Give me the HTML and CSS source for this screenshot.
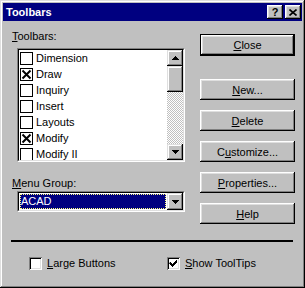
FILE: index.html
```html
<!DOCTYPE html>
<html>
<head>
  <title>Toolbars</title>
  <meta name="viewport" content="width=device-width, initial-scale=1.0">
  <link rel="stylesheet" href="styles.css">
</head>
<body>
<div class="ventana">
  <div class="titulo">
    <span class="titulo-texto">Toolbars</span>
    <div class="titulo-botones">
      <div class="cap-btn">?</div>
      <div class="cap-btn">
        <svg width="8" height="7" viewBox="0 0 8 7"><path d="M0.5 0.5 L7.5 6.5 M7.5 0.5 L0.5 6.5" stroke="#000" stroke-width="1.6"/></svg>
      </div>
    </div>
  </div>

  <div class="principal">
    <div class="izquierda">
      <div class="etiqueta"><u>T</u>oolbars:</div>
      <div class="lista">
        <div class="lista-interior">
          <div class="items">
            <div class="item"><span class="caja"></span>Dimension</div>
            <div class="item"><span class="caja marcada"><svg width="11" height="11" viewBox="0 0 11 11"><path d="M1.5 1.5 L9.5 9.5 M9.5 1.5 L1.5 9.5" stroke="#000" stroke-width="2"/></svg></span>Draw</div>
            <div class="item"><span class="caja"></span>Inquiry</div>
            <div class="item"><span class="caja"></span>Insert</div>
            <div class="item"><span class="caja"></span>Layouts</div>
            <div class="item"><span class="caja marcada"><svg width="11" height="11" viewBox="0 0 11 11"><path d="M1.5 1.5 L9.5 9.5 M9.5 1.5 L1.5 9.5" stroke="#000" stroke-width="2"/></svg></span>Modify</div>
            <div class="item"><span class="caja"></span>Modify II</div>
          </div>
          <div class="scroll">
            <div class="flecha">
              <svg width="7" height="4" viewBox="0 0 7 4"><path d="M3 0h1v1h1v1h1v1h1v1h-7v-1h1v-1h1v-1h1z" fill="#000"/></svg>
            </div>
            <div class="pulgar"></div>
            <div class="pista"></div>
            <div class="flecha">
              <svg width="7" height="4" viewBox="0 0 7 4"><path d="M0 0h7v1h-1v1h-1v1h-1v1h-1v-1h-1v-1h-1v-1h-1z" fill="#000"/></svg>
            </div>
          </div>
        </div>
      </div>

      <div class="etiqueta etiqueta-menu"><u>M</u>enu Group:</div>
      <div class="combo">
        <div class="combo-interior">
          <div class="combo-campo">
            <div class="combo-sel">ACAD</div>
          </div>
          <div class="flecha combo-flecha">
            <svg width="7" height="4" viewBox="0 0 7 4"><path d="M0 0h7v1h-1v1h-1v1h-1v1h-1v-1h-1v-1h-1v-1h-1z" fill="#000"/></svg>
          </div>
        </div>
      </div>
    </div>

    <div class="derecha">
      <div class="boton boton-defecto"><span><u>C</u>lose</span></div>
      <div class="boton boton-new"><span><u>N</u>ew...</span></div>
      <div class="boton"><span><u>D</u>elete</span></div>
      <div class="boton"><span>C<u>u</u>stomize...</span></div>
      <div class="boton"><span><u>P</u>roperties...</span></div>
      <div class="boton"><span><u>H</u>elp</span></div>
    </div>
  </div>

  <div class="separador"></div>

  <div class="opciones">
    <div class="opcion opcion-large">
      <span class="check"></span>
      <span><u>L</u>arge Buttons</span>
    </div>
    <div class="opcion">
      <span class="check"><svg width="13" height="13" viewBox="0 0 13 13"><path d="M3 5h1v1h1v1h1v-1h1v-1h1v-1h1v-1h1v3h-1v1h-1v1h-1v1h-1v1h-1v-1h-1v-1h-1v-1h-1z" fill="#000"/></svg></span>
      <span><u>S</u>how ToolTips</span>
    </div>
  </div>
</div>
</body>
</html>
```

FILE: styles.css
```css
body {
  margin: 0;
  font-family: "Liberation Sans", Arial, sans-serif;
  font-size: 11px;
  color: #000;
  background-color: #c0c0c0;
}

.ventana {
  width: 305px;
  height: 288px;
  box-sizing: border-box;
  padding: 3px;
  background-color: #c0c0c0;
  box-shadow: inset -1px -1px #000, inset 1px 1px #dfdfdf, inset -2px -2px #808080, inset 2px 2px #fff;
}

/* barra de titulo */
.titulo {
  height: 18px;
  background-color: #000080;
  color: white;
  display: flex;
  align-items: center;
  justify-content: space-between;
  padding: 0 1px 0 3px;
}

.titulo-texto {
  font-weight: bold;
  font-size: 11px;
}

.titulo-botones {
  display: flex;
  gap: 2px;
}

.cap-btn {
  width: 16px;
  height: 14px;
  box-sizing: border-box;
  background-color: #c0c0c0;
  color: black;
  font-weight: bold;
  font-size: 11px;
  display: flex;
  align-items: center;
  justify-content: center;
  box-shadow: inset -1px -1px #000, inset 1px 1px #fff, inset -2px -2px #808080, inset 2px 2px #dfdfdf;
}

/* contenido */
.principal {
  display: flex;
  align-items: flex-start;
  padding-left: 9px;
}

.izquierda {
  width: 173px;
  padding-top: 9px;
}

.etiqueta {
  height: 13px;
  line-height: 13px;
}

.etiqueta-menu {
  margin-top: 15px;
}

.lista {
  margin: 5px 0 0 5px;
  width: 168px;
  height: 114px;
  box-sizing: border-box;
  border: 1px solid;
  border-color: #808080 #fff #fff #808080;
}

.lista-interior {
  height: 100%;
  box-sizing: border-box;
  border: 1px solid;
  border-color: #000 #dfdfdf #dfdfdf #000;
  display: flex;
  background-color: white;
}

.items {
  flex: 1;
  overflow: hidden;
}

.item {
  height: 16px;
  line-height: 16px;
  display: flex;
  align-items: flex-start;
  white-space: nowrap;
}

.caja {
  width: 13px;
  height: 13px;
  box-sizing: border-box;
  border: 1px solid black;
  margin: 2px 3px 0 1px;
  flex-shrink: 0;
  display: flex;
}

.scroll {
  width: 16px;
  display: flex;
  flex-direction: column;
}

.flecha {
  width: 16px;
  height: 16px;
  box-sizing: border-box;
  background-color: #c0c0c0;
  display: flex;
  align-items: center;
  justify-content: center;
  flex-shrink: 0;
  box-shadow: inset -1px -1px #000, inset 1px 1px #dfdfdf, inset -2px -2px #808080, inset 2px 2px #fff;
}

.pulgar {
  height: 26px;
  flex-shrink: 0;
  background-color: #c0c0c0;
  box-shadow: inset -1px -1px #000, inset 1px 1px #dfdfdf, inset -2px -2px #808080, inset 2px 2px #fff;
}

.pista {
  flex: 1;
  background: repeating-conic-gradient(#c0c0c0 0 25%, #fff 0 50%) 0 0 / 2px 2px;
}

/* combo */
.combo {
  margin: 1px 0 0 5px;
  width: 168px;
  height: 21px;
  box-sizing: border-box;
  border: 1px solid;
  border-color: #808080 #fff #fff #808080;
}

.combo-interior {
  height: 100%;
  box-sizing: border-box;
  border: 1px solid;
  border-color: #000 #dfdfdf #dfdfdf #000;
  display: flex;
  background-color: white;
}

.combo-campo {
  flex: 1;
  padding: 1px;
}

.combo-sel {
  height: 100%;
  box-sizing: border-box;
  background-color: #000080;
  color: white;
  border: 1px dotted #ffff80;
  line-height: 13px;
  padding-left: 0;
}

.combo-flecha {
  height: 17px;
}

/* botones */
.derecha {
  margin-left: 15px;
  padding-top: 13px;
  width: 95px;
  display: flex;
  flex-direction: column;
  gap: 10px;
}

.boton {
  height: 21px;
  box-sizing: border-box;
  background-color: #c0c0c0;
  display: flex;
  align-items: center;
  justify-content: center;
  box-shadow: inset -1px -1px #000, inset 1px 1px #fff, inset -2px -2px #808080, inset 2px 2px #dfdfdf;
}

.boton-defecto {
  height: 22px;
  border: 1px solid black;
}

.boton-new {
  margin-top: 13px;
}

.separador {
  margin: 16px 0 0 8px;
  width: 282px;
  height: 2px;
  background-color: black;
}

/* opciones de abajo */
.opciones {
  margin-top: 15px;
  padding-left: 26px;
  display: flex;
  height: 13px;
}

.opcion {
  display: flex;
  align-items: center;
  gap: 5px;
  line-height: 13px;
}

.opcion-large {
  width: 138px;
}

.check {
  width: 13px;
  height: 13px;
  display: flex;
  background-color: white;
  box-shadow: inset 1px 1px #808080, inset -1px -1px #fff, inset 2px 2px #000, inset -2px -2px #dfdfdf;
}
```
